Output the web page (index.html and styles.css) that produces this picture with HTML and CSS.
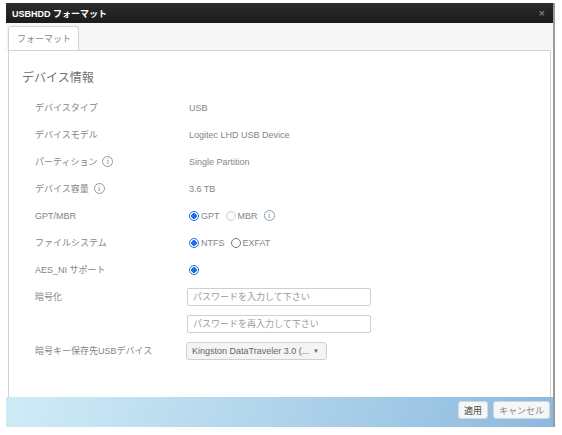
FILE: index.html
```html
<!DOCTYPE html>
<html lang="ja">
<head>
<meta charset="utf-8">
<title>USBHDD フォーマット</title>
<link rel="stylesheet" href="styles.css">
</head>
<body>
<div class="dialog">
  <div class="titlebar">
    <span class="title">USBHDD フォーマット</span>
    <span class="close">×</span>
  </div>
  <div class="tabstrip">
    <div class="tab">フォーマット</div>
  </div>
  <div class="panel">
    <div class="heading">デバイス情報</div>
    <div class="row"><div class="label">デバイスタイプ</div><div class="value">USB</div></div>
    <div class="row"><div class="label">デバイスモデル</div><div class="value">Logitec LHD USB Device</div></div>
    <div class="row"><div class="label">パーティション <span class="info">i</span></div><div class="value">Single Partition</div></div>
    <div class="row"><div class="label">デバイス容量 <span class="info">i</span></div><div class="value">3.6 TB</div></div>
    <div class="row"><div class="label">GPT/MBR</div>
      <div class="value opts">
        <span class="radio on"></span><span class="opt">GPT</span>
        <span class="radio disabled"></span><span class="opt">MBR</span>
        <span class="info">i</span>
      </div>
    </div>
    <div class="row"><div class="label">ファイルシステム</div>
      <div class="value opts">
        <span class="radio on"></span><span class="opt">NTFS</span>
        <span class="radio off"></span><span class="opt">EXFAT</span>
      </div>
    </div>
    <div class="row"><div class="label">AES_NI サポート</div>
      <div class="value opts"><span class="radio on"></span></div>
    </div>
    <div class="row"><div class="label">暗号化</div>
      <div class="value"><input class="field" type="password" placeholder="パスワードを入力して下さい"></div>
    </div>
    <div class="row"><div class="label"></div>
      <div class="value"><input class="field" type="password" placeholder="パスワードを再入力して下さい"></div>
    </div>
    <div class="row"><div class="label">暗号キー保存先USBデバイス</div>
      <div class="value"><div class="select"><span class="seltext">Kingston DataTraveler 3.0 (...</span><span class="caret">▼</span></div></div>
    </div>
  </div>
  <div class="footer">
    <button class="btn">適用</button>
    <button class="btn">キャンセル</button>
  </div>
</div>
</body>
</html>
```

FILE: styles.css
```css
* { box-sizing: border-box; }
html, body { margin: 0; padding: 0; background: #ffffff; }
body {
  font-family: "Liberation Sans", "Noto Sans CJK JP", sans-serif;
  font-size: 9px;
  color: #858585;
}
.dialog {
  margin: 3px 0 0 6px;
  width: 549px;
  border-right: 2px solid #9a9a9a;
  display: flex;
  flex-direction: column;
}
.titlebar {
  height: 20px;
  background: linear-gradient(#2c2c2c, #1b1b1b);
  display: flex;
  align-items: center;
  justify-content: space-between;
  padding: 0 8px 0 6px;
}
.title {
  color: #fff;
  font-weight: bold;
  font-size: 9px;
}
.close {
  color: #999;
  font-size: 11px;
}
.tabstrip {
  height: 27px;
  background: #f6f6f6;
  display: flex;
  align-items: flex-end;
  padding-left: 2px;
}
.tab {
  width: 71px;
  height: 24px;
  background: #fff;
  border: 1px solid #cdd3da;
  border-bottom: none;
  border-radius: 3px 3px 0 0;
  color: #888;
  font-size: 9px;
  display: flex;
  align-items: center;
  padding-left: 8px;
}
.panel {
  margin: 0 2px;
  height: 347px;
  border: 1px solid #d2d2d2;
  border-bottom: none;
  background: #fff;
  padding: 17px 0 0 13px;
}
.heading {
  font-size: 12px;
  line-height: 20px;
  color: #707070;
  margin-bottom: 6px;
}
.row {
  display: flex;
  align-items: center;
  height: 27px;
  padding-left: 13px;
}
.label {
  width: 154px;
  display: flex;
  align-items: center;
  gap: 5px;
}
.value {
  display: flex;
  align-items: center;
}
.opts { gap: 2px; }
.opt { margin-right: 4px; }
.info {
  display: inline-flex;
  align-items: center;
  justify-content: center;
  width: 11px;
  height: 11px;
  border: 1px solid #8a9bb0;
  border-radius: 50%;
  font-size: 8px;
  color: #6a7f98;
  font-family: "Liberation Serif", serif;
  line-height: 1;
}
.radio {
  width: 10px;
  height: 10px;
  border-radius: 50%;
  display: inline-block;
}
.radio.on {
  border: 1.5px solid #1e6fe6;
  background: radial-gradient(circle, #1e6fe6 0 2.6px, #fff 3px);
}
.radio.off {
  border: 1px solid #777;
  background: #fff;
}
.radio.disabled {
  border: 1px solid #d4d4d4;
  background: #fafafa;
}
.field {
  margin-left: -2px;
  width: 184px;
  height: 18px;
  border: 1px solid #cfcfcf;
  border-radius: 2px;
  padding: 0 5px;
  font-family: inherit;
  font-size: 9px;
  color: #555;
  background: #fff;
  outline: none;
}
.field::placeholder { color: #9a9a9a; }
.select {
  margin-left: -3px;
  width: 141px;
  height: 18px;
  border: 1px solid #d0d0d0;
  border-radius: 3px;
  background: #f4f4f4;
  display: flex;
  align-items: center;
  justify-content: space-between;
  padding: 0 7px 0 5px;
  color: #666;
}
.caret { font-size: 6px; color: #666; }
.footer {
  height: 30px;
  background: linear-gradient(100deg, #d0ebf7 0%, #b3d6ec 45%, #8db9df 100%);
  display: flex;
  justify-content: flex-end;
  align-items: flex-start;
  padding: 4px 3px 0 0;
  gap: 5px;
}
.btn {
  height: 18px;
  border: 1px solid #cfd6dc;
  border-radius: 3px;
  background: #f6f6f6;
  font-family: inherit;
  font-size: 9px;
  color: #444;
  padding: 0 5px;
}
.btn + .btn { color: #888; }
```
